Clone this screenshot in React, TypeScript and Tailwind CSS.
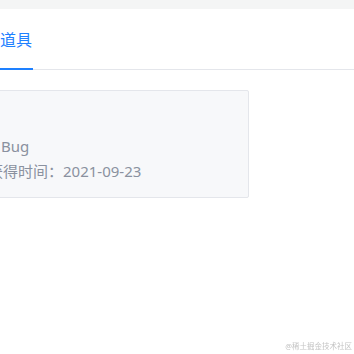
import React from 'react';

const font = { fontFamily: '"Noto Sans", "Noto Sans CJK SC", sans-serif' };

function PropCard() {
  return (
    <div className="-ml-[60px] mt-[20px] w-[309px] h-[108px] bg-[#f7f8fa] border border-[#e4e6eb] rounded-[2px] flex">
      <div className="w-[47px] shrink-0" />
      <div className="flex flex-col justify-end pb-[13px] text-[15px] leading-[25px] text-[#8a919f]">
        <div className="pl-[13px]">Bug</div>
        <div>获得时间：2021-09-23</div>
      </div>
    </div>
  );
}

export default function App() {
  return (
    <div className="w-[354px] h-[354px] bg-white overflow-hidden relative" style={font}>
      {/* top band */}
      <div className="h-[9px] bg-[#f4f5f5]" />

      {/* tabs */}
      <div className="h-[61px] border-b border-[#e4e6eb] flex items-stretch">
        <div className="relative flex items-center pt-[2px]">
          <span className="text-[16px] text-[#1e80ff] leading-none">道具</span>
          <div className="absolute left-0 -bottom-[1px] w-[33px] h-[2px] bg-[#1e80ff]" />
        </div>
      </div>

      <PropCard />

      {/* watermark */}
      <div className="absolute right-[2px] bottom-[4px] text-[7.5px] leading-none text-[#b4b4b4] opacity-80 blur-[0.3px]">
        @稀土掘金技术社区
      </div>
    </div>
  );
}
